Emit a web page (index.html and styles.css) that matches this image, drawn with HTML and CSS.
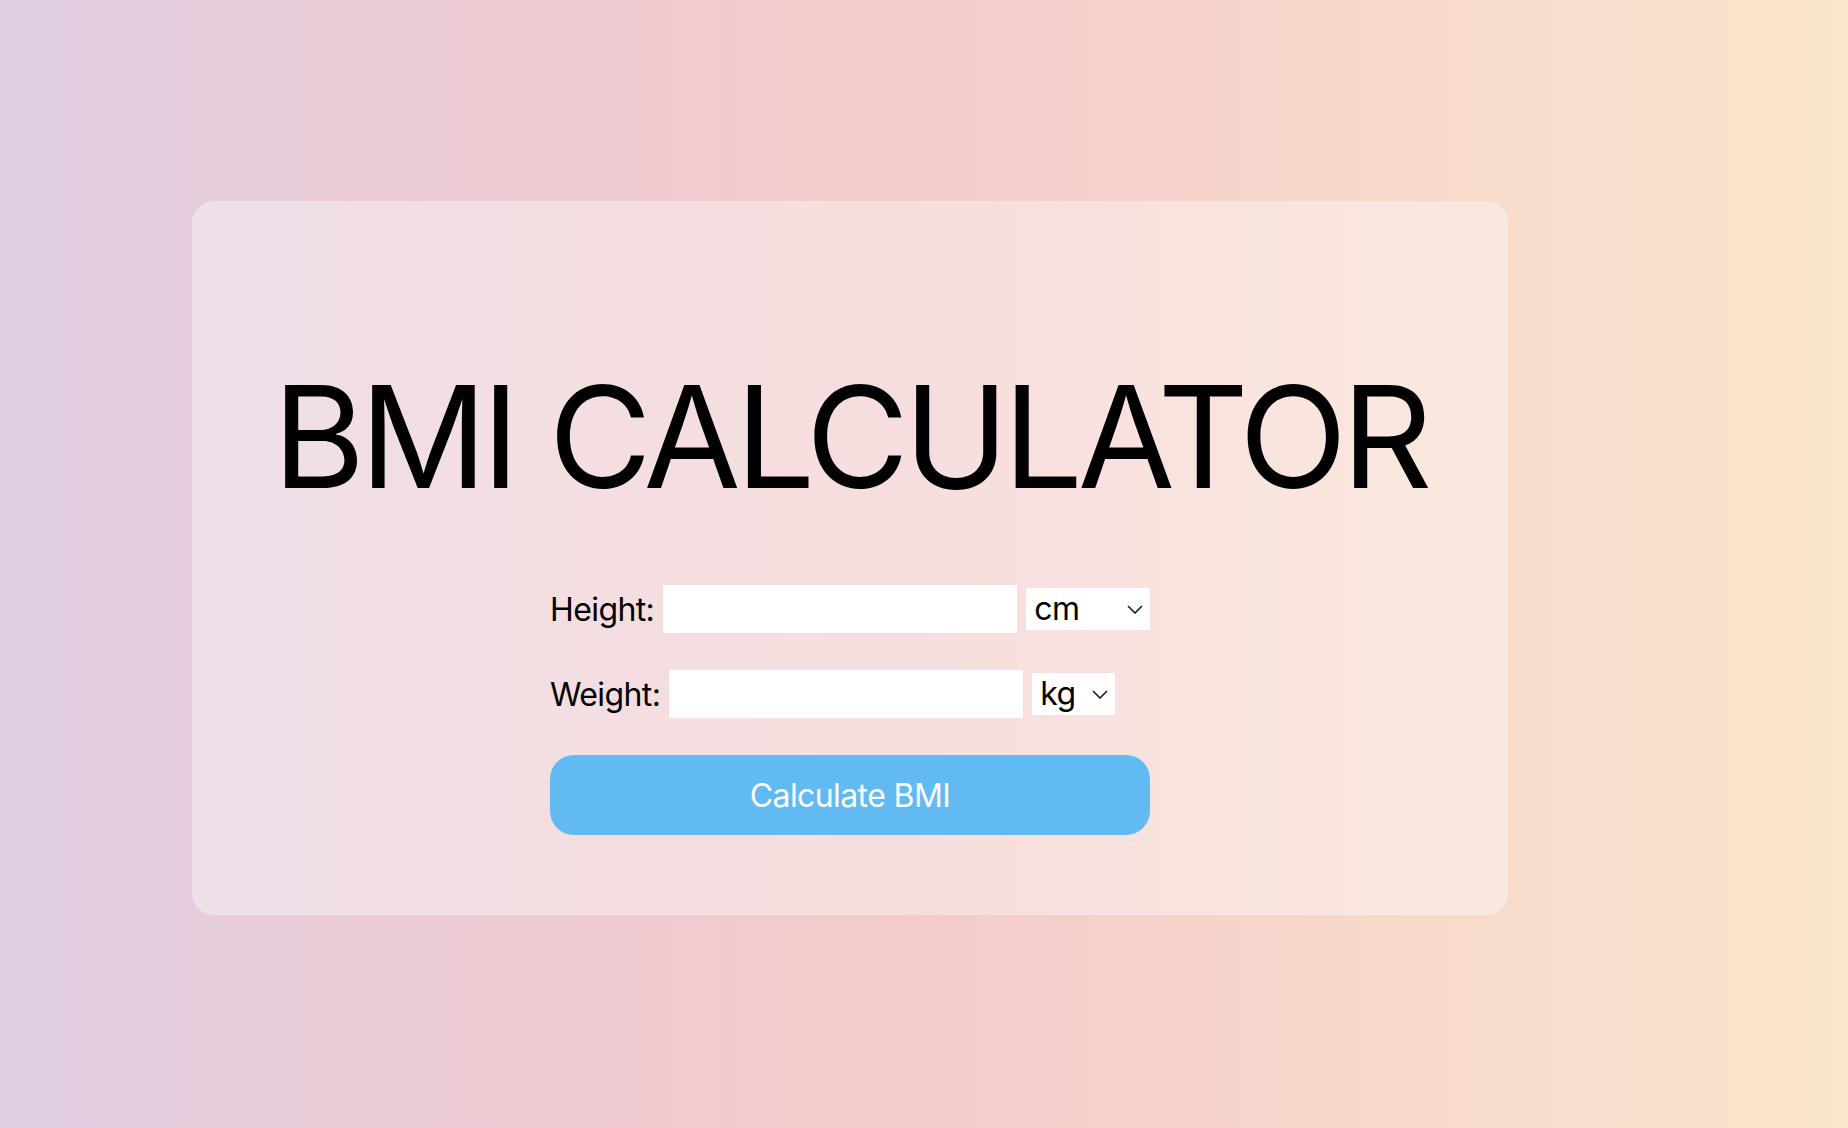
FILE: index.html
```html
<!DOCTYPE html>
<html lang="en">
<head>
<meta charset="utf-8">
<title>BMI Calculator</title>
<link rel="stylesheet" href="styles.css">
</head>
<body>
  <main class="card">
    <h1 class="title">BMI CALCULATOR</h1>
    <form class="form">
      <div class="row">
        <label class="label" for="height">Height:</label>
        <input class="field" id="height" type="text">
        <span class="select-wrap unit-height">
          <select class="unit">
            <option>cm</option>
            <option>m</option>
          </select>
          <svg class="chevron" width="16" height="9" viewBox="0 0 16 9"><path d="M1 1 L8 8 L15 1" fill="none" stroke="#1a1a1a" stroke-width="1.6"/></svg>
        </span>
      </div>
      <div class="row">
        <label class="label" for="weight">Weight:</label>
        <input class="field" id="weight" type="text">
        <span class="select-wrap unit-weight">
          <select class="unit">
            <option>kg</option>
            <option>lb</option>
          </select>
          <svg class="chevron" width="16" height="9" viewBox="0 0 16 9"><path d="M1 1 L8 8 L15 1" fill="none" stroke="#1a1a1a" stroke-width="1.6"/></svg>
        </span>
      </div>
      <button class="btn" type="button">Calculate BMI</button>
    </form>
  </main>
</body>
</html>
```

FILE: styles.css
```css
* { box-sizing: border-box; }

html, body {
  margin: 0;
  height: 100%;
}

body {
  min-height: 1128px;
  background: linear-gradient(to right, #e0cee2 0%, #eccbd4 25%, #f3cbcb 48%, #f6d6cb 70%, #fae6cb 100%);
  font-family: Inter, "Liberation Sans", sans-serif;
  color: #000;
  padding: 201px 0 0 192px;
}

.card {
  width: 1316px;
  height: 714px;
  background: rgba(255, 255, 255, 0.36);
  border-radius: 22px;
  padding-top: 165px;
  display: flex;
  flex-direction: column;
  align-items: center;
}

.title {
  margin: 0;
  font-size: 141px;
  line-height: 141px;
  font-weight: 400;
  letter-spacing: -5.3px;
  white-space: nowrap;
}

.form {
  width: 600px;
  margin-top: 78px;
  display: flex;
  flex-direction: column;
  gap: 37px;
}

.row {
  display: flex;
  align-items: center;
  gap: 9px;
  height: 48px;
}

.label {
  font-size: 32px;
  letter-spacing: -0.6px;
}

.field {
  width: 354px;
  height: 48px;
  border: none;
  background: #fff;
  font-size: 32px;
  padding: 0 8px;
  font-family: inherit;
}

.select-wrap {
  position: relative;
  display: inline-block;
  height: 42px;
}

.unit-height { width: 125px; }
.unit-weight { width: 83px; }

.unit {
  appearance: none;
  -webkit-appearance: none;
  width: 100%;
  height: 42px;
  border: none;
  border-radius: 0;
  background: #fff;
  font-family: inherit;
  font-size: 32px;
  letter-spacing: -0.6px;
  color: #000;
  padding: 0 0 0 8px;
  line-height: 42px;
}

.chevron {
  position: absolute;
  right: 7px;
  top: 17px;
  pointer-events: none;
}

.btn {
  width: 600px;
  height: 80px;
  border: none;
  border-radius: 24px;
  background: #62baf2;
  color: #fff;
  font-family: inherit;
  font-size: 32px;
  letter-spacing: -0.6px;
  cursor: pointer;
}
```
